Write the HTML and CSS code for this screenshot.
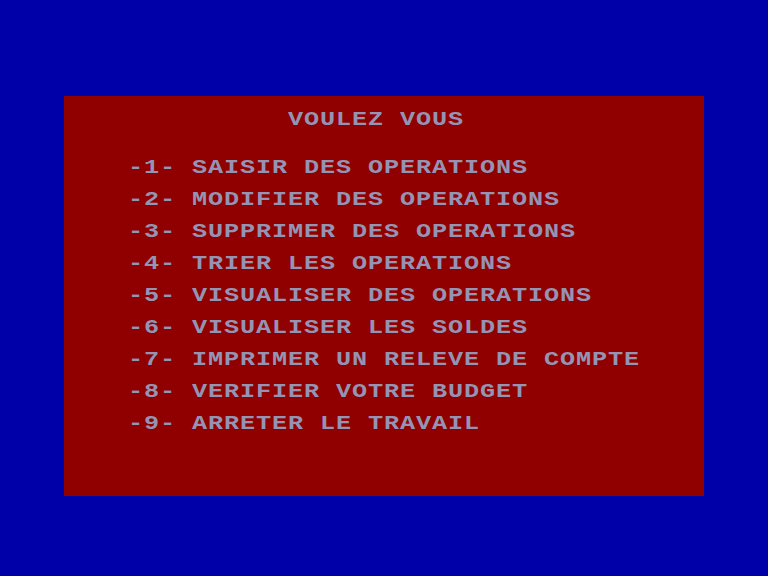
FILE: index.html
```html
<!DOCTYPE html>
<html lang="fr">

<head>
    <meta charset="UTF-8">
    <title>Menu</title>
    <link rel="stylesheet" href="styles.css">
</head>

<body>
    <div class="screen">
        <div class="title">VOULEZ VOUS</div>
        <ul class="menu">
            <li>-1- SAISIR DES OPERATIONS</li>
            <li>-2- MODIFIER DES OPERATIONS</li>
            <li>-3- SUPPRIMER DES OPERATIONS</li>
            <li>-4- TRIER LES OPERATIONS</li>
            <li>-5- VISUALISER DES OPERATIONS</li>
            <li>-6- VISUALISER LES SOLDES</li>
            <li>-7- IMPRIMER UN RELEVE DE COMPTE</li>
            <li>-8- VERIFIER VOTRE BUDGET</li>
            <li>-9- ARRETER LE TRAVAIL</li>
        </ul>
    </div>
</body>

</html>
```

FILE: styles.css
```css
* {
    margin: 0px;
    padding: 0px;
    box-sizing: border-box;
}

body {
    background-color: #0000a8;
    height: 576px;
    overflow: hidden;
    padding-top: 96px;
}

.screen {
    width: 640px;
    height: 400px;
    margin: 0px auto;
    background-color: #900000;
    padding-top: 16px;
    color: #9494b4;
    font-family: "Liberation Mono", "DejaVu Sans Mono", monospace;
    font-weight: bold;
    font-size: 21px;
}

/* each character cell is 16px wide, glyphs stretched a bit */
.title,
.menu li {
    height: 16px;
    line-height: 16px;
    white-space: pre;
    letter-spacing: 0.73px;
    transform: scaleX(1.2);
    transform-origin: left top;
}

.title {
    width: 480px;
    padding-left: 186.67px;
    margin-bottom: 32px;
}

.menu {
    list-style: none;
    padding-left: 64px;
}

.menu li {
    width: 440px;
    margin-bottom: 16px;
}
```
